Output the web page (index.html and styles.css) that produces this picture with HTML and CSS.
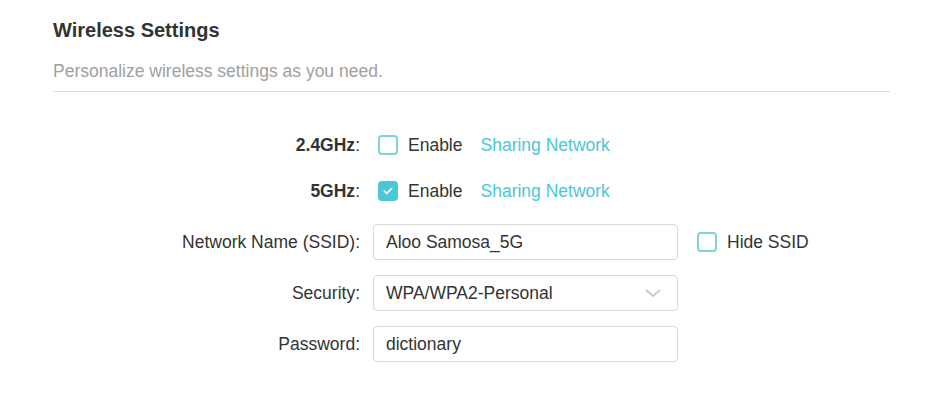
FILE: index.html
```html
<!DOCTYPE html>
<html lang="en">
<head>
  <meta charset="UTF-8">
  <title>Wireless Settings</title>
  <link rel="stylesheet" href="styles.css">
</head>
<body>
  <div class="panel">
    <div class="panel-head">
      <h2>Wireless Settings</h2>
      <p class="desc">Personalize wireless settings as you need.</p>
    </div>

    <div class="form">
      <!-- band toggles -->
      <div class="row row-check">
        <label class="label"><b>2.4GHz</b>:</label>
        <div class="control">
          <span class="checkbox"></span>
          <span class="check-text">Enable</span>
          <a class="link">Sharing Network</a>
        </div>
      </div>
      <div class="row row-check">
        <label class="label"><b>5GHz</b>:</label>
        <div class="control">
          <span class="checkbox checked">
            <svg viewBox="0 0 20 20" width="20" height="20"><path d="M5.5 10.2l3 2.9 6-6" fill="none" stroke="#fff" stroke-width="2.2" stroke-linecap="round" stroke-linejoin="round"/></svg>
          </span>
          <span class="check-text">Enable</span>
          <a class="link">Sharing Network</a>
        </div>
      </div>

      <!-- fields -->
      <div class="row row-field">
        <label class="label">Network Name (SSID):</label>
        <div class="control">
          <div class="input">Aloo Samosa_5G</div>
          <span class="checkbox hide-ssid"></span>
          <span class="check-text">Hide SSID</span>
        </div>
      </div>
      <div class="row row-field">
        <label class="label">Security:</label>
        <div class="control">
          <div class="input select">
            <span>WPA/WPA2-Personal</span>
            <svg class="chevron" viewBox="0 0 16 8" width="16" height="8"><path d="M1 1l7 6 7-6" fill="none" stroke="#c8c8c8" stroke-width="1.8"/></svg>
          </div>
        </div>
      </div>
      <div class="row row-field">
        <label class="label">Password:</label>
        <div class="control">
          <div class="input">dictionary</div>
        </div>
      </div>
    </div>
  </div>
</body>
</html>
```

FILE: styles.css
```css
body {
  margin: 0;
  background: #fff;
  font-family: "Liberation Sans", Arial, sans-serif;
  color: #333;
}

.panel {
  width: 837px;
  padding: 18px 0 0 53px;
}

.panel-head {
  border-bottom: 1px solid #dcdcdc;
  padding-bottom: 9px;
}

.panel-head h2 {
  margin: 0;
  font-size: 20px;
  line-height: 24px;
  font-weight: bold;
  color: #333;
}

.desc {
  margin: 18px 0 0;
  font-size: 17.5px;
  line-height: 22px;
  color: #a0a0a0;
}

.form {
  padding-top: 40px;
}

.row {
  display: flex;
  align-items: center;
  font-size: 17.5px;
}

.row-check {
  height: 26px;
  margin-bottom: 20px;
}

.row-field {
  height: 36px;
  margin-bottom: 15px;
}

.row-check + .row-field {
  margin-top: 2px;
}

.label {
  width: 307px;
  text-align: right;
  color: #333;
}

.label b {
  font-weight: bold;
}

.control {
  display: flex;
  align-items: center;
  margin-left: 13px;
}

.checkbox {
  width: 16px;
  height: 16px;
  border: 2px solid #7dd4d9;
  border-radius: 4px;
  display: flex;
  align-items: center;
  justify-content: center;
  margin-left: 5px;
}

.checkbox.checked {
  background: #4bc7d6;
  border-color: #4bc7d6;
}

.checkbox svg {
  width: 16px;
  height: 16px;
}

.check-text {
  margin-left: 10px;
  color: #333;
}

.link {
  margin-left: 18px;
  color: #4bc7d6;
  cursor: pointer;
}

.input {
  box-sizing: border-box;
  width: 305px;
  height: 36px;
  border: 1px solid #d9d9d9;
  border-radius: 4px;
  padding: 0 12px;
  display: flex;
  align-items: center;
  color: #333;
}

.select {
  justify-content: space-between;
}

.chevron {
  margin-right: 4px;
}

.hide-ssid {
  margin-left: 19px;
}
```
